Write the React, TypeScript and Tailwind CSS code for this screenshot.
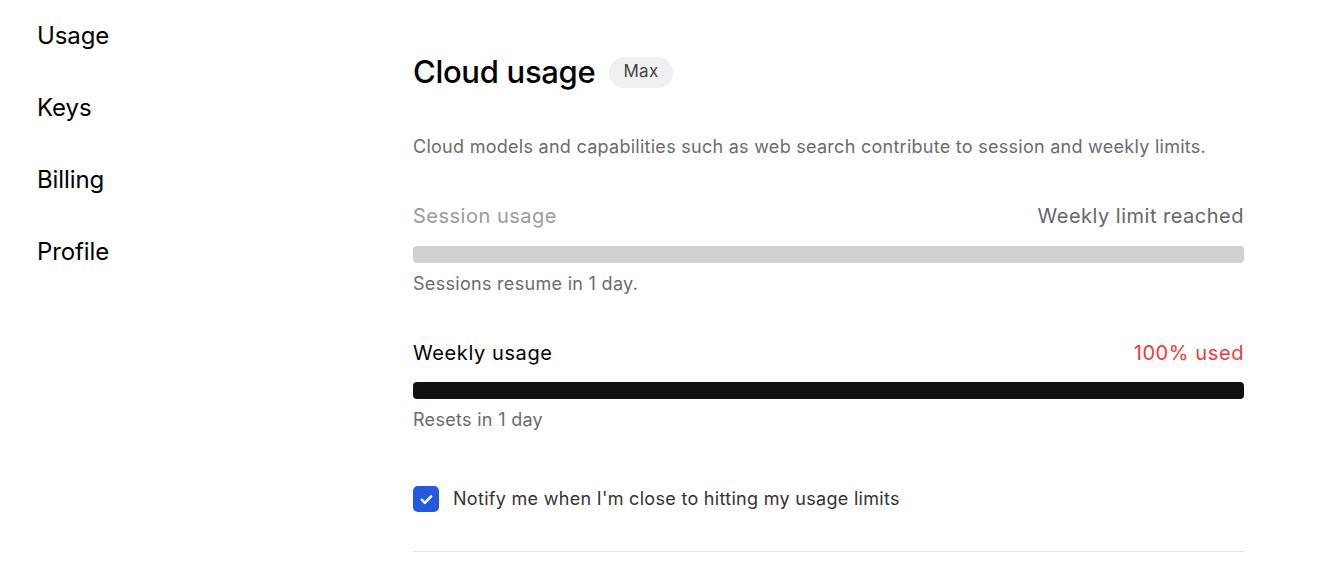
import React from 'react';

const navItems = ['Usage', 'Keys', 'Billing', 'Profile'];

const UsageBar: React.FC<{ fill: string }> = ({ fill }) => (
  <div className={`h-[17px] w-full rounded-[4px] ${fill}`} />
);

const App: React.FC = () => {
  return (
    <div className="flex min-h-[561px] bg-white font-['Inter',sans-serif] antialiased">
      <aside className="w-[413px] shrink-0 pl-[37px] pt-[22px]">
        <nav className="flex flex-col gap-[44px]">
          {navItems.map((item) => (
            <a key={item} className="text-[24px] leading-[28px] text-black tracking-[-0.1px]">
              {item}
            </a>
          ))}
        </nav>
      </aside>

      <main className="w-[831px] pt-[54px]">
        <div className="flex items-center gap-[14px]">
          <h1 className="text-[31px] leading-[36px] font-medium text-black tracking-[-0.3px]">Cloud usage</h1>
          <span className="rounded-full bg-[#f0f0f0] px-[14px] h-[31px] flex items-center text-[17px] tracking-[0.3px] text-[#444]">
            Max
          </span>
        </div>

        <p className="mt-[45px] text-[18px] leading-[24px] text-[#6b6b6b] tracking-[0.27px]">
          Cloud models and capabilities such as web search contribute to session and weekly limits.
        </p>

        {/* session limit */}
        <div className="mt-[43px]">
          <div className="flex items-center justify-between text-[20px] leading-[28px] tracking-[0.5px]">
            <span className="text-[#9b9b9b]">Session usage</span>
            <span className="text-[#666]">Weekly limit reached</span>
          </div>
          <div className="mt-[16px]">
            <UsageBar fill="bg-[#d0d0d0]" />
          </div>
          <p className="mt-[9px] text-[18px] leading-[24px] text-[#6b6b6b] tracking-[0.3px]">Sessions resume in 1 day.</p>
        </div>

        {/* weekly limit */}
        <div className="mt-[43px]">
          <div className="flex items-center justify-between text-[20px] leading-[28px] tracking-[0.6px]">
            <span className="text-black">Weekly usage</span>
            <span className="text-[#ef3b3b]">100% used</span>
          </div>
          <div className="mt-[15px]">
            <UsageBar fill="bg-[#111111]" />
          </div>
          <p className="mt-[9px] text-[18px] leading-[24px] text-[#6b6b6b] tracking-[0.3px]">Resets in 1 day</p>
        </div>

        <label className="mt-[54px] flex items-center gap-[14px]">
          <span className="flex h-[26px] w-[26px] items-center justify-center rounded-[5px] bg-[#2358e0]">
            <svg width="17" height="17" viewBox="0 0 24 24" fill="none" stroke="white" strokeWidth="3.6" strokeLinecap="round" strokeLinejoin="round">
              <path d="M5.5 12.5l4.2 4.2L18.5 7.5" />
            </svg>
          </span>
          <span className="text-[18px] leading-[26px] text-[#333] tracking-[0.3px]">Notify me when I'm close to hitting my usage limits</span>
        </label>

        <div className="mt-[39px] h-px w-full bg-[#e3e3e3]" />
      </main>
    </div>
  );
};

export default App;
